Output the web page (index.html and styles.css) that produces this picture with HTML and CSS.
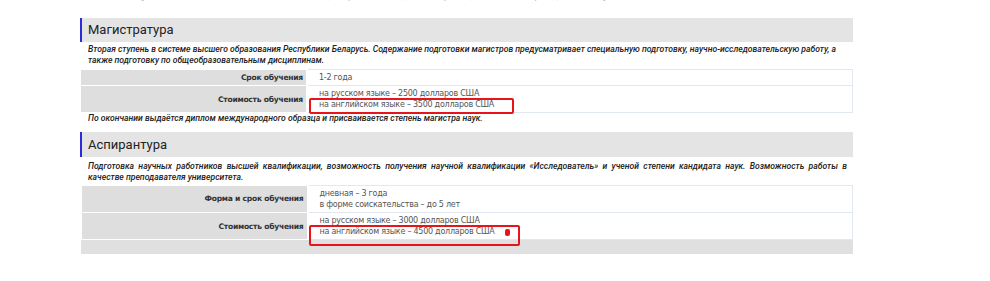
FILE: index.html
```html
<!DOCTYPE html>
<html lang="ru">
<head>
<meta charset="utf-8">
<title>Магистратура и аспирантура</title>
<link rel="stylesheet" href="styles.css">
</head>
<body>
<div class="wrap">
  <p class="cut">Стоимость обучения на английском языке составляет 3500 долларов США в год, оплата производится по семестрам до начала обучения</p>

  <section class="block">
    <h2 class="title">Магистратура</h2>
    <p class="lead">Вторая ступень в системе высшего образования Республики Беларусь. Содержание подготовки магистров предусматривает специальную подготовку, научно-исследовательскую работу, а также подготовку по общеобразовательным дисциплинам.</p>
    <table class="info">
      <tr>
        <th>Срок обучения</th>
        <td>1-2 года</td>
      </tr>
      <tr>
        <th>Стоимость обучения</th>
        <td>на русском языке – 2500 долларов США<br>на английском языке – 3500 долларов США</td>
      </tr>
    </table>
    <p class="note">По окончании выдаётся диплом международного образца и присваивается степень магистра наук.</p>
  </section>

  <section class="block block-second">
    <h2 class="title">Аспирантура</h2>
    <p class="lead lead-justify">Подготовка научных работников высшей квалификации, возможность получения научной квалификации «Исследователь» и ученой степени кандидата наук. Возможность работы в качестве преподавателя университета.</p>
    <table class="info">
      <tr>
        <th>Форма и срок обучения</th>
        <td>дневная – 3 года<br>в форме соискательства – до 5 лет</td>
      </tr>
      <tr>
        <th>Стоимость обучения</th>
        <td>на русском языке – 3000 долларов США<br>на английском языке – 4500 долларов США</td>
      </tr>
      <tr class="foot">
        <td colspan="2"></td>
      </tr>
    </table>
  </section>

  <div class="mark mark-one"></div>
  <div class="mark mark-two"></div>
  <div class="dot"></div>
</div>
</body>
</html>
```

FILE: styles.css
```css
html, body {
  margin: 0;
  padding: 0;
  background: #ffffff;
}

body {
  font-family: "DejaVu Sans", Verdana, sans-serif;
  color: #333;
  overflow: hidden;
}

.wrap {
  position: relative;
  display: flow-root;
  width: 773px;
  margin-left: 80px;
}

.cut {
  margin: -9px 0 0 8px;
  font-size: 8px;
  line-height: 11px;
  letter-spacing: -0.35px;
  color: #aaa;
  height: 11px;
  white-space: nowrap;
}

.block {
  margin-top: 16px;
}

.block-second {
  margin-top: 8px;
}

.title {
  margin: 0;
  height: 24px;
  line-height: 24px;
  padding-left: 6px;
  border-left: 2px solid #2b2bd9;
  background: #e4e4e4;
  font-family: Roboto, "Open Sans", sans-serif;
  font-weight: 400;
  font-size: 13px;
  color: #222;
}

.block-second .title {
  height: 25px;
  line-height: 25px;
}

.lead {
  margin: 2px 0 0 0;
  padding: 0 2px 0 8px;
  font-family: Roboto, "Open Sans", sans-serif;
  font-style: italic;
  font-weight: 500;
  font-size: 8.6px;
  line-height: 11px;
  color: #222;
}

.lead-justify {
  text-align: justify;
  padding-right: 6px;
  margin-top: 4px;
}

.info {
  width: 772px;
  margin: 3px 0 0 1px;
  border-collapse: collapse;
  font-size: 8px;
  line-height: 11px;
}

.block-second .info {
  margin-top: 2px;
}

.info th {
  width: 222px;
  padding: 2px 3px 2px 0;
  background: #dedede;
  border-bottom: 1px solid #fff;
  border-right: 2px solid #fff;
  text-align: right;
  font-weight: 700;
  font-size: 7.6px;
  letter-spacing: -0.25px;
  color: #333;
  vertical-align: middle;
}

.info td {
  padding: 2px 8px 2px 11px;
  border: 1px solid #e1e7f3;
  color: #555;
  letter-spacing: -0.25px;
  vertical-align: middle;
}

.info .foot td {
  height: 13px;
  padding: 0;
  background: #e0e0e0;
  border-color: #e0e0e0;
}

.note {
  margin: 0;
  padding-left: 8px;
  font-family: Roboto, "Open Sans", sans-serif;
  font-style: italic;
  font-weight: 500;
  font-size: 8.6px;
  line-height: 11px;
  color: #222;
}

.mark {
  position: absolute;
  border: 2px solid #e8141b;
  border-radius: 2px;
  box-sizing: border-box;
}

.mark-one {
  left: 229px;
  top: 98px;
  width: 205px;
  height: 16px;
}

.mark-two {
  left: 229px;
  top: 225px;
  width: 211px;
  height: 21px;
}

.dot {
  position: absolute;
  left: 425px;
  top: 229px;
  width: 5px;
  height: 7px;
  border-radius: 2px;
  background: #e8141b;
}
```
